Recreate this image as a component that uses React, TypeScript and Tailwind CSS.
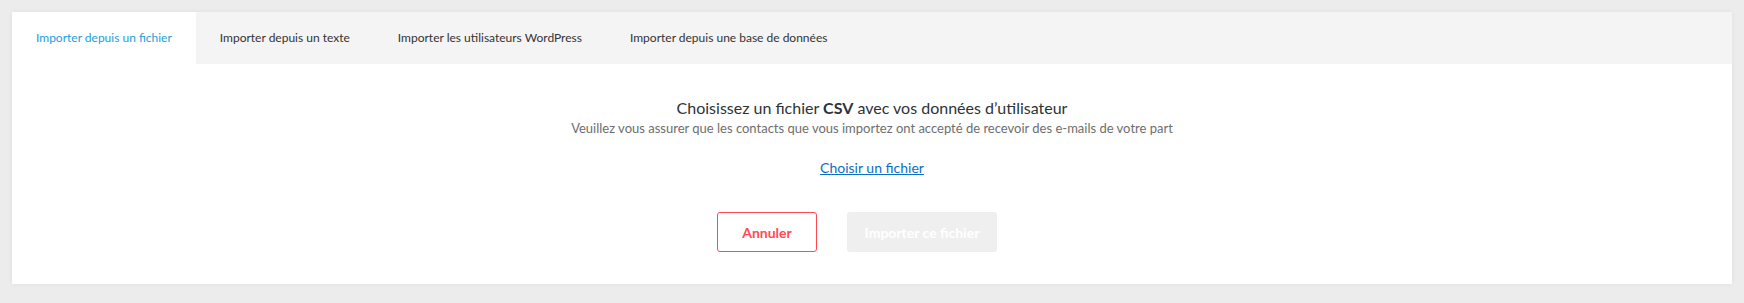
import { useState } from "react";

const tabs = [
  "Importer depuis un fichier",
  "Importer depuis un texte",
  "Importer les utilisateurs WordPress",
  "Importer depuis une base de données",
];

export default function App() {
  const [active, setActive] = useState(0);

  return (
    <div
      className="min-h-[303px] bg-[#ececec] p-3 pb-[19px]"
      style={{ fontFamily: "Lato, 'Open Sans', sans-serif" }}
    >
      <div className="bg-white shadow-[0_0_6px_rgba(0,0,0,0.05)]">
        {/* Tabs */}
        <div className="flex h-[52px] bg-[#f4f4f4]">
          {tabs.map((t, i) => (
            <button
              key={t}
              onClick={() => setActive(i)}
              className={`px-6 text-[12px] ${
                i === active ? "bg-white text-[#1a9fdb]" : "text-[#333333]"
              }`}
            >
              {t}
            </button>
          ))}
        </div>

        {/* Body */}
        <div className="flex flex-col items-center pt-[33px] pb-8">
          <p className="text-[16px] leading-[22px] text-[#2c3338]">
            Choisissez un fichier <b className="font-bold">CSV</b> avec vos données d’utilisateur
          </p>
          <p className="text-[13px] leading-[18px] text-[#6e6e6e]">
            Veuillez vous assurer que les contacts que vous importez ont accepté de recevoir des e-mails de votre part
          </p>
          <a href="#" className="mt-[22px] text-[14px] leading-[18px] text-[#0b6dc4] underline">
            Choisir un fichier
          </a>
          <div className="mt-[35px] mr-[30px] flex gap-[30px]">
            <button className="h-10 w-[100px] rounded-[3px] border border-[#ff4a54] text-[14px] font-bold text-[#ff4a54]">
              Annuler
            </button>
            <button className="h-10 w-[150px] rounded-[3px] bg-[#efefef] text-[14px] font-bold text-white">
              Importer ce fichier
            </button>
          </div>
        </div>
      </div>
    </div>
  );
}
